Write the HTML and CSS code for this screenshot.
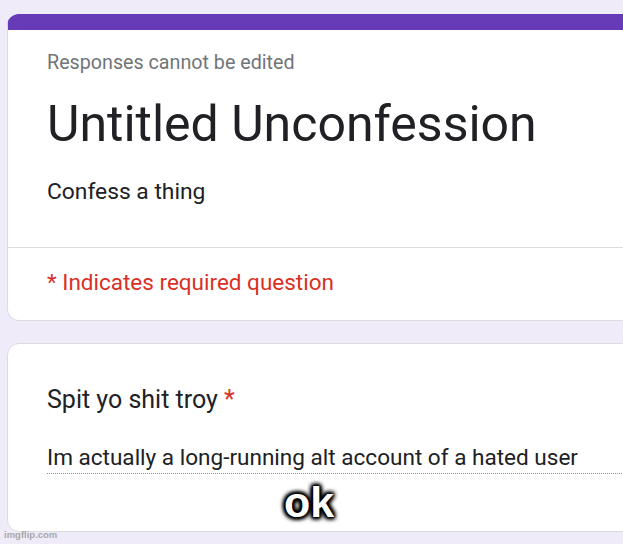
FILE: index.html
```html
<!DOCTYPE html>
<html lang="en">
<head>
<meta charset="utf-8">
<title>Untitled Unconfession</title>
<link rel="stylesheet" href="styles.css">
</head>
<body>
<main class="page">
  <section class="card header-card">
    <div class="header-main">
      <p class="notice">Responses cannot be edited</p>
      <h1 class="title">Untitled Unconfession</h1>
      <p class="desc">Confess a thing</p>
    </div>
    <div class="header-foot">
      <p class="required">* Indicates required question</p>
    </div>
  </section>
  <section class="card question-card">
    <p class="question">Spit yo shit troy <span class="star">*</span></p>
    <p class="answer">Im actually a long-running alt account of a hated user</p>
    <span class="caption">ok</span>
  </section>
</main>
<span class="watermark">imgflip.com</span>
</body>
</html>
```

FILE: styles.css
```css
html, body {
  margin: 0;
  padding: 0;
  width: 623px;
  height: 544px;
  overflow: hidden;
  background: #f0ebf8;
  font-family: Roboto, "Liberation Sans", Arial, sans-serif;
  color: #202124;
}

.page {
  position: relative;
  padding: 14px 0 0 7px;
  display: flex;
  flex-direction: column;
  gap: 22px;
}

.card {
  width: 660px;
  box-sizing: border-box;
  background: #fff;
  border: 1px solid #dadce0;
  border-radius: 12px;
}

.header-card {
  border-top: 16px solid #673ab7;
  overflow: hidden;
}

.header-main {
  padding: 20px 0 40px 39px;
  border-bottom: 1px solid #dadce0;
}

p, h1 {
  margin: 0;
}

.notice {
  font-size: 19.7px;
  line-height: 26px;
  color: #70757a;
}

.title {
  margin-top: 18px;
  font-size: 50px;
  font-weight: 400;
  line-height: 60px;
  color: #202124;
}

.desc {
  margin-top: 23px;
  font-size: 22.8px;
  line-height: 30px;
}

.header-foot {
  padding: 20px 0 24px 39px;
}

.required {
  font-size: 22.5px;
  line-height: 28px;
  color: #d93025;
}

.question-card {
  position: relative;
  padding: 40px 0 57px 39px;
}

.question {
  font-size: 25px;
  line-height: 32px;
}

.star {
  color: #d93025;
}

.answer {
  margin-top: 27px;
  font-size: 22.55px;
  line-height: 30px;
  border-bottom: 1px dotted #8a8a8a;
}

.caption {
  position: absolute;
  left: 276px;
  top: 133px;
  font-family: "Liberation Sans", Arial, sans-serif;
  font-weight: 700;
  font-size: 43px;
  line-height: 50px;
  color: #fff;
  text-shadow:
    0 0 2px #000, 0 0 2px #000, 0 0 3px #000, 0 0 5px #000,
    2px 2px 4px #000, -2px -2px 4px #000, 2px -2px 4px #000, -2px 2px 4px #000;
}

.watermark {
  position: absolute;
  left: 4px;
  top: 529px;
  font-family: "Liberation Sans", Arial, sans-serif;
  font-size: 9.5px;
  font-weight: 700;
  line-height: 12px;
  color: #a8a8a8;
}
```
